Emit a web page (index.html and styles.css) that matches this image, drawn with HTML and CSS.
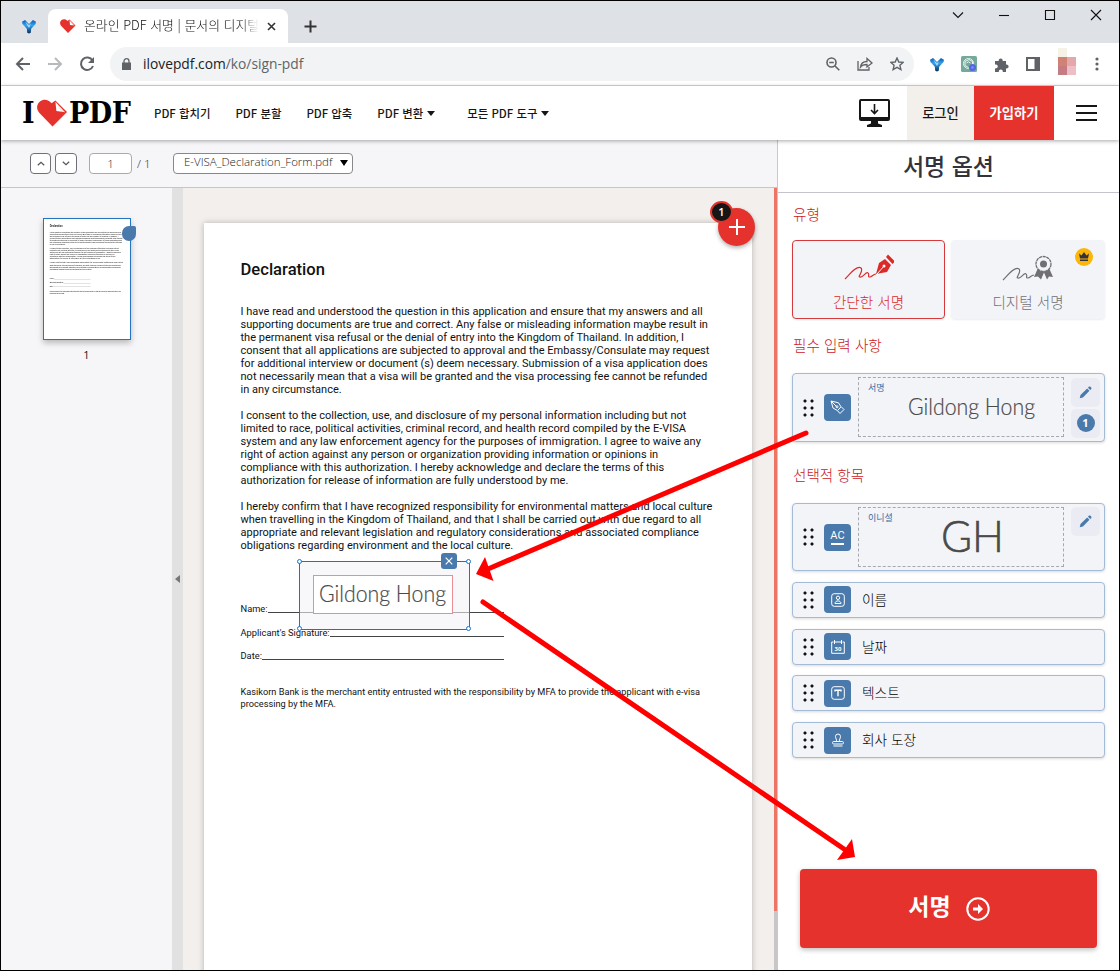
FILE: index.html
```
<!DOCTYPE html>
<html lang="ko">
<head>
<meta charset="UTF-8" />
<title>온라인 PDF 서명 | 문서의 디지털 서명</title>
<meta name="viewport" content="width=device-width, initial-scale=1" />
<link rel="stylesheet" href="styles.css">
</head>
<body>

<!-- Shared icons -->
<svg class="defs" width="0" height="0">
  <defs>
    <linearGradient id="blue-y" x1="0" y1="0" x2="0" y2="1">
      <stop offset="0" stop-color="#0b57b0" />
      <stop offset=".4" stop-color="#37a5ee" />
      <stop offset="1" stop-color="#062b60" />
    </linearGradient>
    <symbol id="y-mark" viewBox="0 0 16 16">
      <path fill="url(#blue-y)" d="M0 2.500 3.500.5 8 5 12.500.5 16 2.500 15.500 5 10.500 10.500 10 15 8 16 6 15 5.500 10.500.5 5Z" />
      <path fill="#a8dcff" d="m3.500 2 4.500 4.500L10 4.500 8.500 9h-1Z" />
    </symbol>
    <symbol id="heart" viewBox="0 0 32 28">
      <path fill="#e5322d" d="M16 28 2.500 14C-1 10-.5 5 3 2c4-3 9-2 12 2L19 1l12 12Z" />
      <path fill="#fff" d="M19 2.500 20 12l9 1.200Z" />
      <path fill="#e5322d" d="m20 3 10 10-5 .5Z" opacity=".12" />
    </symbol>
    <symbol id="pencil" viewBox="0 0 14 14">
      <path fill="#4a7aab" d="M.8 13.200 1.600 9.800 8.800 2.700 11.300 5.200 4.200 12.400ZM9.600 1.900l1-1c.5-.5 1.200-.5 1.700 0l.8.8c.5.5.5 1.200 0 1.700l-1 1Z" />
    </symbol>
    <symbol id="scribble" viewBox="0 0 34 14">
      <path fill="none" stroke="currentColor" stroke-width="1.200" d="M1 13C6 8 13-1 17 2c3 3-4 9-1 9 3 1 6-6 8-4 2 1-1 4 2 4 2 0 3-3 6-3" />
    </symbol>
  </defs>
</svg>

<div class="window">

  <div class="tabstrip">
    <div class="pinned"><svg width="14" height="15"><use href="#y-mark" /></svg></div>
    <div class="tab">
      <svg width="16" height="14"><use href="#heart" /></svg>
      <span class="tab-title">온라인 PDF 서명 | 문서의 디지털</span>
      <svg width="9" height="9" viewBox="0 0 9 9"><path d="m1 1 7 7M8 1 1 8" stroke="#333" stroke-width="1.600" /></svg>
    </div>
    <svg class="newtab" width="13" height="13" viewBox="0 0 13 13"><path d="M6.500 0.500v12M.5 6.500h12" stroke="#333" stroke-width="2" /></svg>
    <div class="controls">
      <svg width="12" height="12" viewBox="0 0 12 12"><path d="m1 3.500 5 5 5-5" /></svg>
      <svg width="12" height="12" viewBox="0 0 12 12"><path d="M1 6.500h10" /></svg>
      <svg width="12" height="12" viewBox="0 0 12 12"><path d="M1.500 1.500h9v9h-9z" /></svg>
      <svg width="12" height="12" viewBox="0 0 12 12"><path d="m1 1 10 10M11 1 1 11" /></svg>
    </div>
  </div>

  <div class="navbar">
    <svg width="16" height="14" viewBox="0 0 16 14"><path d="M15 7H2M8 1 2 7l6 6" fill="none" stroke="#5f6368" stroke-width="2" /></svg>
    <svg width="16" height="14" viewBox="0 0 16 14"><path d="M1 7h13M8 1l6 6-6 6" fill="none" stroke="#b7babd" stroke-width="2" /></svg>
    <svg width="16" height="16" viewBox="0 0 16 16"><path d="M13.500 4.500A6.200 6.200 0 1 0 14 10" fill="none" stroke="#5f6368" stroke-width="2" /><path d="M15 1v6H9Z" fill="#5f6368" /></svg>
    <div class="omnibox">
      <svg width="9" height="12" viewBox="0 0 9 12"><path d="M0 4.500h9V12H0z" fill="#5f6368" /><path d="M2 5V3.200a2.500 2.500 0 0 1 5 0V5" fill="none" stroke="#5f6368" stroke-width="1.300" /></svg>
      <span class="url">ilovepdf.com<span>/ko/sign-pdf</span></span>
      <svg width="14" height="14" viewBox="0 0 14 14" fill="none" stroke="#5f6368" stroke-width="1.600"><circle cx="5.500" cy="5.500" r="4.500" /><path d="m9 9 4.300 4.300M3.200 5.500h4.600" /></svg>
      <svg width="16" height="14" viewBox="0 0 16 14" fill="none" stroke="#5f6368" stroke-width="1.300"><path d="M1 4v9h11V10" /><path d="M3.500 10C4 6 6.500 4.500 10 4.500V1.500l5 4.500-5 4V7.500C7 7.500 5 8 3.500 10Z" /></svg>
      <svg width="14" height="14" viewBox="0 0 14 14" fill="none" stroke="#5f6368" stroke-width="1.400"><path d="m7 1 1.800 4 4.300.4-3.200 2.900 1 4.200L7 10.300l-3.900 2.200 1-4.200L.9 5.400 5.200 5Z" /></svg>
    </div>
    <div class="extensions">
      <svg width="14" height="15"><use href="#y-mark" /></svg>
      <svg width="16" height="16" viewBox="0 0 16 16"><rect width="16" height="16" rx="1.500" fill="#74aa9c" /><g fill="none" stroke="#e9f4f0"><circle cx="7.500" cy="7.500" r="5" /><path d="m4 5.500 4-2 3.500 2v4M4 5.500v4l3.500 2M5.500 7l2-1.200 2 1.200" /></g><circle cx="11.500" cy="11.500" r="3.500" fill="#5266e0" /><circle cx="11.500" cy="11.500" r="1.300" fill="#7b91ff" /></svg>
      <svg width="15" height="15" viewBox="0 0 15 15"><path fill="#5f6368" d="M1 4h3.800a2 2 0 1 1 3.800 0H12v3.600a2 2 0 1 1 0 3.800V15H8.700a2 2 0 1 0-3.800 0H1v-3.700a2 2 0 1 0 0-3.700Z" /></svg>
      <svg width="14" height="14" viewBox="0 0 14 14"><path fill="#5f6368" fill-rule="evenodd" d="M0 0h14v14H0zM2 2v10h6.500V2z" /></svg>
      <svg class="avatar" width="18" height="27" viewBox="0 0 18 27" shape-rendering="crispEdges"><path fill="#f5f3e7" d="M0 0h9v9H0z" /><path fill="#d08275" d="M0 9h9v9H0z" /><path fill="#c47c82" d="M0 18h9v9H0z" /><path fill="#e4a8ab" d="M9 9h9v9H9z" /><path fill="#edbfc5" d="M9 18h9v9H9z" /></svg>
      <svg class="dots" width="4" height="14" viewBox="0 0 4 14" fill="#5f6368"><circle cx="2" cy="2" r="1.600" /><circle cx="2" cy="7" r="1.600" /><circle cx="2" cy="12" r="1.600" /></svg>
    </div>
  </div>

  <header class="site-header">
    <a class="logo">
      <span class="logo-i">I</span>
      <svg width="31" height="28"><use href="#heart" /></svg>
      <span class="logo-pdf">PDF</span>
    </a>
    <nav class="menu">
      <a>PDF 합치기</a>
      <a>PDF 분할</a>
      <a>PDF 압축</a>
      <a class="has-menu">PDF 변환</a>
      <a class="has-menu">모든 PDF 도구</a>
    </nav>
    <svg class="desktop" width="31" height="28" viewBox="0 0 31 28"><path fill="#161616" d="M2 0h27a2 2 0 0 1 2 2v18a2 2 0 0 1-2 2H19v2.500l4 1.500v2H8v-2l4-1.500V22H2a2 2 0 0 1-2-2V2a2 2 0 0 1 2-2Z" /><path fill="#fff" d="M2 2h27v16H2z" /><path d="M15.500 5v9M12 11l3.500 3.500L19 11" fill="none" stroke="#161616" stroke-width="1.600" /></svg>
    <a class="login">로그인</a>
    <a class="signup">가입하기</a>
    <span class="burger"><i></i><i></i><i></i></span>
  </header>

  <div class="workspace">
    <section class="editor">
      <div class="pdfbar">
        <span class="page-btn"><svg width="8" height="5" viewBox="0 0 8 5"><path d="m.8 4.200 3.200-3 3.200 3" /></svg></span>
        <span class="page-btn"><svg width="8" height="5" viewBox="0 0 8 5"><path d="m.8.8 3.200 3 3.200-3" /></svg></span>
        <span class="page-num">1</span>
        <span class="page-total">/ 1</span>
        <span class="file-select">E-VISA_Declaration_Form.pdf<i></i></span>
      </div>
      <div class="panes">
        <aside class="thumbs">
          <div class="thumb">
            <div class="thumb-page" id="thumb-page"></div>
            <span class="thumb-dot"></span>
          </div>
          <span class="thumb-num">1</span>
        </aside>
        <div class="splitter"><i></i></div>
        <div class="viewer">
          <div class="page">
            <div class="doc" id="doc">
              <h1>Declaration</h1>
              <p>I have read and understood the question in this application and ensure that my answers and all<br>
              supporting documents are true and correct. Any false or misleading information maybe result in<br>
              the permanent visa refusal or the denial of entry into the Kingdom of Thailand. In addition, I<br>
              consent that all applications are subjected to approval and the Embassy/Consulate may request<br>
              for additional interview or document (s) deem necessary. Submission of a visa application does<br>
              not necessarily mean that a visa will be granted and the visa processing fee cannot be refunded<br>
              in any circumstance.</p>
              <p>I consent to the collection, use, and disclosure of my personal information including but not<br>
              limited to race, political activities, criminal record, and health record compiled by the E-VISA<br>
              system and any law enforcement agency for the purposes of immigration. I agree to waive any<br>
              right of action against any person or organization providing information or opinions in<br>
              compliance with this authorization. I hereby acknowledge and declare the terms of this<br>
              authorization for release of information are fully understood by me.</p>
              <p>I hereby confirm that I have recognized responsibility for environmental matters and local culture<br>
              when travelling in the Kingdom of Thailand, and that I shall be carried out with due regard to all<br>
              appropriate and relevant legislation and regulatory considerations and associated compliance<br>
              obligations regarding environment and the local culture.</p>
              <div class="fields">
                <div class="field">Name:<i></i></div>
                <div class="field">Applicant's Signature:<i></i></div>
                <div class="field">Date:<i></i></div>
              </div>
              <p class="note">Kasikorn Bank is the merchant entity entrusted with the responsibility by MFA to provide the applicant with e-visa<br>processing by the MFA.</p>
            </div>
            <div class="placed">
              <div class="placed-inner">
                <svg width="134" height="37"><text class="hand" x="2" y="26" font-size="24" textLength="127" lengthAdjust="spacingAndGlyphs">Gildong Hong</text></svg>
              </div>
              <b class="nw"></b><b class="ne"></b><b class="sw"></b><b class="se"></b>
              <span class="remove"><svg width="8" height="8" viewBox="0 0 8 8"><path d="m.7.7 6.600 6.600M7.300.7.700 7.300" stroke="#fff" stroke-width="1.200" /></svg></span>
            </div>
            <div class="fab"><svg width="18" height="18" viewBox="0 0 18 18"><path d="M9 1v16M1 9h16" stroke="#fff" stroke-width="2" /></svg><span>1</span></div>
          </div>
        </div>
        <div class="scrollbar"><i></i></div>
      </div>
    </section>

    <aside class="options">
      <h2>서명 옵션</h2>
      <div class="options-body">
        <h3>유형</h3>
        <div class="types">
          <div class="type active">
            <svg width="50" height="26" viewBox="0 0 50 26"><use href="#scribble" x="0" y="12" width="34" height="14" /><path fill="currentColor" d="M32 20 35 9l6-4 6 6-4 7ZM42 3l2-2.500 7 7L48.500 10Z" /><path d="m33 20 7-8" stroke="#fff" /><circle cx="40" cy="12" r="1.500" fill="#fff" /></svg>
            <span>간단한 서명</span>
          </div>
          <div class="type">
            <svg width="52" height="26" viewBox="0 0 52 26"><use href="#scribble" x="0" y="12" width="34" height="14" /><path fill="currentColor" d="m36 13-4 9 4-.5 3 3 3-7 3 7 2-3 4 .5-4-9Z" /><circle cx="41.500" cy="9" r="7.500" fill="#f3f4f8" stroke="currentColor" stroke-width="1.300" stroke-dasharray="3.200 .6" /><circle cx="41.500" cy="9" r="3.500" fill="currentColor" /></svg>
            <span>디지털 서명</span>
            <em class="crown"><svg width="10" height="9" viewBox="0 0 10 9"><path fill="#33333b" d="M0 1.500 2.500 3.500 5 0l2.500 3.500L10 1.500 9 6.500H1ZM1 7.500h8V9H1z" /></svg></em>
          </div>
        </div>

        <h3 class="required">필수 입력 사항</h3>
        <div class="item tall">
          <span class="drag"></span>
          <span class="tile"><svg width="15" height="15" viewBox="0 0 15 15" fill="none" stroke="#fff"><path d="m1 1 7.500 1.800 2.500 4-3.500 3.800L3 8ZM1 1l5.500 5.500M11.500 7l2.500 2.500-4 4L7.800 11" /><circle cx="7" cy="6.800" r="1" /></svg></span>
          <div class="preview"><small>서명</small><svg width="140" height="44"><text class="hand" x="3" y="30" font-size="24" textLength="127" lengthAdjust="spacingAndGlyphs">Gildong Hong</text></svg></div>
          <div class="actions">
            <span><svg width="13" height="13"><use href="#pencil" /></svg></span>
            <span><b>1</b></span>
          </div>
        </div>

        <h3 class="optional">선택적 항목</h3>
        <div class="item tall">
          <span class="drag"></span>
          <span class="tile ac">AC</span>
          <div class="preview initials"><small>이니셜</small><svg width="72" height="56"><text class="hand big" x="2" y="43" font-size="43" textLength="63" lengthAdjust="spacingAndGlyphs">GH</text></svg></div>
          <div class="actions">
            <span><svg width="13" height="13"><use href="#pencil" /></svg></span>
          </div>
        </div>
        <div class="item">
          <span class="drag"></span>
          <span class="tile"><svg width="14" height="14" viewBox="0 0 14 14" fill="none" stroke="#fff"><rect x=".7" y=".7" width="12.600" height="12.600" rx="2.500" /><circle cx="7" cy="4.800" r="1.700" /><path d="M4 10.500c0-3.500 6-3.500 6 0Z" /></svg></span>
          <span class="name">이름</span>
        </div>
        <div class="item">
          <span class="drag"></span>
          <span class="tile"><svg width="14" height="15" viewBox="0 0 14 15" fill="none" stroke="#fff"><path d="M4 3h6M2.500 3H.7v11.300h12.600V3h-1.800M3.500 1v4M10.500 1v4" /><text x="7" y="11.500" text-anchor="middle">30</text></svg></span>
          <span class="name">날짜</span>
        </div>
        <div class="item">
          <span class="drag"></span>
          <span class="tile"><svg width="14" height="14" viewBox="0 0 14 14" fill="none" stroke="#fff"><rect x=".7" y=".7" width="12.600" height="12.600" rx="2.500" /><path d="M4 5.500V4.300h6v1.200M7 4.300v6" stroke-width="1.400" /></svg></span>
          <span class="name">텍스트</span>
        </div>
        <div class="item">
          <span class="drag"></span>
          <span class="tile"><svg width="14" height="14" viewBox="0 0 14 14" fill="none" stroke="#fff"><path d="M5.500 8.500C6 6.500 4.500 5.500 4.500 3.500a2.500 2.500 0 0 1 5 0c0 2-1.500 3-1 5" /><rect x="1.500" y="8.500" width="11" height="2.500" rx="1.200" /><path d="M2.500 13h9" /></svg></span>
          <span class="name">회사 도장</span>
        </div>
      </div>
      <button class="sign" type="button"><span>서명</span>
        <svg width="24" height="24" viewBox="0 0 24 24"><circle cx="12" cy="12" r="10.700" fill="none" stroke="#fff" stroke-width="2" /><path fill="#fff" d="M7 10.500h5V7l5 5-5 5v-3.500H7z" /></svg>
      </button>
    </aside>
  </div>

  <!-- Guide arrows drawn over the page -->
  <svg class="arrows" width="1118" height="969" viewBox="1 1 1118 969">
    <g stroke="#f00" stroke-width="5" stroke-linecap="round"><path d="M806 433 488 569" /><path d="m483 602 361 247" /></g>
    <path fill="#f00" d="m485 557-9 17 17.500 7ZM852 839l3 18-18 3Z" />
  </svg>
</div>

<script>
  // The thumbnail is a scaled copy of the document
  const copy = document.getElementById('doc').cloneNode(true);
  copy.removeAttribute('id');
  copy.setAttribute('aria-hidden', 'true');
  document.getElementById('thumb-page').appendChild(copy);
</script>

</body>
</html>
```
FILE: styles.css
```
:root {
  --red: #e5322d;
  --blue: #4a7aab;
  --line: #a4bbd8;
  --soft: #f3f4f8;
  --ko: "Noto Sans CJK KR", sans-serif;
}
* {
  box-sizing: border-box;
}
body {
  margin: 0;
  font-family: "Open Sans", var(--ko);
  color: #161616;
}
svg {
  display: block;
  flex-shrink: 0;
}
.defs {
  position: absolute;
}
.window {
  position: relative;
  display: flex;
  flex-direction: column;
  width: 1120px;
  height: 971px;
  border: 1px solid #000;
  overflow: hidden;
  background: #fff;
}

/* Browser frame */
.tabstrip {
  display: flex;
  height: 42px;
  padding-top: 8px;
  background: #dee1e6;
}
.pinned {
  width: 47px;
  padding: 10px 0 0 21px;
}
.tab {
  display: flex;
  align-items: center;
  width: 240px;
  padding: 0 12px 0 12px;
  border-radius: 8px 8px 0 0;
  background: #fff;
}
.tab-title {
  width: 175px;
  margin: -3px 8px 0;
  overflow: hidden;
  white-space: nowrap;
  font: 300 12.9px var(--ko);
  color: #111;
  mask-image: linear-gradient(to right, #000 90%, transparent);
}
.newtab {
  margin: 11px 0 0 16px;
}
.controls {
  display: flex;
  gap: 34px;
  margin-left: auto;
  padding-right: 17px;
}
.controls svg {
  fill: none;
  stroke: #111;
  stroke-width: 1.1;
}
.navbar {
  display: flex;
  align-items: center;
  height: 43px;
  padding-left: 14px;
  gap: 16px;
  border-bottom: 1px solid #d5d7da;
}
.omnibox {
  display: flex;
  align-items: center;
  width: 804px;
  height: 34px;
  margin-left: -1px;
  padding: 0 10px 0 12px;
  border-radius: 17px;
  background: #f1f3f4;
  gap: 17px;
}
.url {
  flex: 1;
  margin: -1px 0 0 -5px;
  font: 13.8px "Open Sans", sans-serif;
  color: #202124;
}
.url span {
  color: #5f6368;
}
.extensions {
  display: flex;
  align-items: center;
  gap: 17px;
}
.avatar {
  margin: -6px 0 0 1px;
}
.dots {
  margin-left: 2px;
}

/* Site header */
.site-header {
  position: relative;
  z-index: 2;
  display: flex;
  align-items: center;
  height: 54px;
  padding-left: 21px;
  background: #fff;
  box-shadow: 0 1px 4px rgba(0,0,0,.35);
}
.logo {
  display: flex;
  align-items: center;
  width: 111px;
  font: bold 30px/30px "DejaVu Serif Condensed", "DejaVu Serif", serif;
  font-stretch: condensed;
  color: #000;
}
.logo-i {
  width: 15px;
}
.logo-pdf {
  margin-left: 1px;
  letter-spacing: -.5px;
}
.menu {
  display: flex;
  gap: 25px;
  margin: -1px 0 0 21px;
  font: 500 11.4px var(--ko);
  white-space: nowrap;
}
.has-menu + .has-menu {
  margin-left: 7px;
}
.has-menu::after {
  content: "";
  display: inline-block;
  margin: 0 0 2px 4px;
  border: 4px solid transparent;
  border-top: 5px solid #161616;
  border-bottom: 0;
}
.desktop {
  margin-left: auto;
  margin-right: 17px;
}
.login,
.signup {
  display: flex;
  align-items: center;
  justify-content: center;
  width: 67px;
  height: 54px;
  padding-bottom: 2px;
  background: #f3f0ec;
  font: 500 13.3px var(--ko);
}
.signup {
  width: 80px;
  background: var(--red);
  color: #fff;
  font-weight: 700;
}
.burger {
  display: grid;
  gap: 5px;
  width: 21px;
  margin: 0 22px;
}
.burger i {
  height: 2px;
  background: #161616;
}

/* Editor */
.workspace {
  display: flex;
  flex: 1;
  min-height: 0;
}
.editor {
  display: flex;
  flex-direction: column;
  width: 776px;
}
.pdfbar {
  display: flex;
  align-items: center;
  height: 48px;
  padding: 0 0 1px 29px;
  background: #f6f6f9;
  border-bottom: 1px solid #c6c6c8;
  color: #222;
  font: 300 11.5px "Open Sans", sans-serif;
}
.page-btn,
.page-num {
  display: flex;
  align-items: center;
  justify-content: center;
  width: 21px;
  height: 21px;
  margin-right: 4px;
  border: 1px solid #707078;
  border-radius: 4px;
  background: #fff;
}
.page-btn + .page-btn {
  width: 22px;
}
.page-btn path {
  fill: none;
  stroke: #555;
  stroke-width: 1.2;
}
.page-num {
  width: 43px;
  margin: 0 5px 0 8px;
  border-color: #aaa;
}
.page-total {
  width: 36px;
}
.file-select {
  display: flex;
  align-items: center;
  justify-content: space-between;
  width: 180px;
  height: 21px;
  padding: 0 4px 3px 10px;
  border: 1px solid #888;
  border-radius: 4px;
  background: #fff;
  font-size: 11.5px;
}
.file-select i {
  margin-top: 3px;
  border: 4px solid transparent;
  border-top: 6px solid #000;
  border-bottom: 0;
}
.panes {
  display: flex;
  flex: 1;
  min-height: 0;
}
.thumbs {
  display: flex;
  flex-direction: column;
  align-items: center;
  width: 171px;
  padding-top: 30px;
  background: #f6f6f9;
}
.thumb {
  position: relative;
  width: 88px;
  height: 122px;
  border: 1px solid #2375c4;
  background: #fff;
  box-shadow: 0 3px 6px rgba(0,0,0,.25);
}
.thumb-page {
  width: 86px;
  height: 120px;
  overflow: hidden;
}
.thumb-page .doc {
  transform: scale(.155);
  transform-origin: 0 0;
}
.thumb-dot {
  position: absolute;
  top: 7px;
  right: -6px;
  width: 14px;
  height: 15px;
  border-radius: 8px 2px 8px 8px;
  background: var(--blue);
}
.thumb-num {
  margin-top: 7px;
  font: 400 11px "Open Sans", sans-serif;
}
.splitter {
  display: flex;
  align-items: center;
  width: 11px;
  padding-left: 3px;
  background: #e1e1e1;
}
.splitter i {
  border: 4px solid transparent;
  border-right: 5px solid #777;
  border-left: 0;
}
.viewer {
  width: 591px;
  padding: 35px 0 0 21px;
  background: #f2efec;
  overflow: hidden;
}
.page {
  position: relative;
  width: 548px;
  height: 775px;
  background: #fff;
  box-shadow: 0 0 6px rgba(0,0,0,.25);
}
.doc {
  width: 548px;
  height: 760px;
  padding: 37px 0 0 36.5px;
  font: 11px/13px Roboto, sans-serif;
  color: #111;
  white-space: nowrap;
}
.doc h1 {
  margin: 0 0 26px;
  font-size: 16.6px;
  line-height: 19px;
  font-weight: 500;
}
.doc p {
  margin: 0 0 13px;
  letter-spacing: .018px;
}
.fields {
  padding-top: 37px;
}
.field {
  display: flex;
  width: 263px;
  height: 23.7px;
  font-size: 9.3px;
}
.field i {
  flex: 1;
  height: 11px;
  border-bottom: 1px solid #444;
}
.doc .note {
  margin-top: 13px;
  font-size: 9.2px;
  line-height: 11.5px;
}
.placed {
  position: absolute;
  left: 95px;
  top: 338px;
  width: 171px;
  height: 69px;
  padding: 13px;
  border: 1px solid #1673d1;
  background: rgba(243,244,248,.6);
}
.placed-inner {
  width: 140px;
  height: 39px;
  padding-left: 3px;
  border: 1px solid #e98e93;
  background: #fff;
}
.placed b {
  position: absolute;
  width: 5px;
  height: 5px;
  border: 1px solid #1673d1;
  border-radius: 50%;
  background: #fff;
}
.placed .nw {
  left: -3px;
  top: -3px;
}
.placed .ne {
  right: -2px;
  top: -3px;
}
.placed .sw {
  left: -3px;
  bottom: -2px;
}
.placed .se {
  right: -2px;
  bottom: -2px;
}
.remove {
  position: absolute;
  right: 12px;
  top: -9px;
  padding: 4px;
  border-radius: 3px;
  background: var(--blue);
}
.hand {
  font-family: Lato, sans-serif;
  font-weight: 300;
  fill: #4a4a4a;
  stroke: #4a4a4a;
  stroke-width: .2px;
}
.hand.big {
  stroke-width: .6px;
}
.fab {
  position: absolute;
  left: 514px;
  top: -15px;
  width: 37px;
  height: 38px;
  padding: 10px;
  border-radius: 50%;
  background: var(--red);
  box-shadow: 0 2px 4px rgba(0,0,0,.3);
}
.fab span {
  position: absolute;
  left: -8px;
  top: -7px;
  width: 23px;
  height: 22px;
  border: 2px solid var(--red);
  border-radius: 50%;
  background: #161616;
  color: #fff;
  font: 600 11px/17px "Open Sans", sans-serif;
  text-align: center;
}
.scrollbar {
  width: 3px;
  background: #c8c6c6;
}
.scrollbar i {
  display: block;
  height: 723px;
  background: #ee7465;
}

/* Signing options */
.options {
  display: flex;
  flex-direction: column;
  width: 342px;
  border-left: 1px solid #c9c9cc;
  background: #fff;
}
.options h2 {
  height: 53px;
  margin: 0;
  border-bottom: 1px solid #c4c4cc;
  font: 500 23px/50px var(--ko);
  text-align: center;
  color: #33333b;
}
.options-body {
  flex: 1;
  padding: 12px 14px 0;
}
.options h3 {
  height: 17px;
  margin: 0 0 18px 1px;
  font: 300 14.6px/17px var(--ko);
  color: #c9181e;
}
.options .required {
  margin: 17px 0 20px 1px;
}
.options .optional {
  margin: 24px 0 20px 1px;
}
.types {
  display: flex;
  gap: 6px;
}
.type {
  position: relative;
  display: flex;
  flex-direction: column;
  align-items: center;
  width: 154px;
  height: 79px;
  padding-top: 14px;
  border: 1px solid transparent;
  border-radius: 4px;
  background: var(--soft);
  color: #707074;
  box-shadow: 0 1px 2px rgba(0,0,0,.08);
}
.type span {
  margin-top: 11px;
  font: 300 14.6px/19px var(--ko);
}
.type.active {
  width: 153px;
  padding-top: 13px;
  border-color: #d5393c;
  color: #dc2a28;
}
.type.active span {
  margin-top: 12px;
}
.crown {
  position: absolute;
  top: 7px;
  right: 11px;
  width: 18px;
  height: 18px;
  padding: 4px;
  border-radius: 50%;
  background: #fbb608;
}
.item {
  display: flex;
  align-items: center;
  width: 313px;
  height: 36px;
  margin-bottom: 10.8px;
  padding-left: 11px;
  border: 1px solid var(--line);
  border-radius: 4px;
  background: var(--soft);
  box-shadow: 0 1px 3px rgba(0,0,0,.15);
}
.item.tall {
  height: 69px;
}
.optional + .item.tall {
  height: 68px;
}
.drag {
  width: 11px;
  height: 18px;
  margin: 0 10px 0 -1px;
  background: radial-gradient(circle at 2px 2px, #111 1.3px, transparent 1.8px) 0 0 / 7px 7px;
}
.tile {
  display: flex;
  align-items: center;
  justify-content: center;
  width: 27px;
  height: 27px;
  border-radius: 4px;
  background: var(--blue);
}
.tile text {
  fill: #fff;
  stroke: none;
  font: bold 6px "Open Sans", sans-serif;
}
.tile.ac {
  flex-direction: column;
  color: #fff;
  font: 400 11px/13px Roboto, sans-serif;
}
.tile.ac::after {
  content: "";
  width: 13px;
  height: 2px;
  margin-top: 1px;
  background: #fff;
}
.name {
  margin: -2px 0 0 11px;
  font: 300 13.7px/20px var(--ko);
  color: #000;
}
.preview {
  position: relative;
  display: flex;
  align-items: center;
  width: 206px;
  height: 60px;
  margin: -1px 0 0 7px;
  padding-left: 46px;
  border: 1px dashed #a7a7b0;
}
.preview.initials {
  padding-left: 80px;
}
.preview small {
  position: absolute;
  left: 9px;
  top: 3px;
  font: 400 9px/13px var(--ko);
  color: #3a6ea5;
}
.actions {
  display: flex;
  flex-direction: column;
  gap: 2px;
  height: 60px;
  margin-left: 7px;
}
.actions span {
  display: flex;
  align-items: center;
  justify-content: center;
  width: 29px;
  height: 29px;
  border-radius: 5px;
  background: #ebebf4;
}
.actions b {
  width: 18px;
  height: 18px;
  border-radius: 50%;
  background: var(--blue);
  color: #fff;
  font: 700 11px/18px "Open Sans", sans-serif;
  text-align: center;
}
.sign {
  display: flex;
  align-items: center;
  justify-content: center;
  gap: 15px;
  width: 297px;
  height: 79px;
  margin: 0 0 22px 22px;
  padding: 0 0 0 1px;
  border: 0;
  border-radius: 4px;
  background: var(--red);
  box-shadow: 0 2px 5px rgba(0,0,0,.25);
  color: #fff;
  font: 700 23px var(--ko);
}
.sign span {
  margin-top: -7px;
}
.arrows {
  position: absolute;
  left: 0;
  top: 0;
  z-index: 5;
}
```
